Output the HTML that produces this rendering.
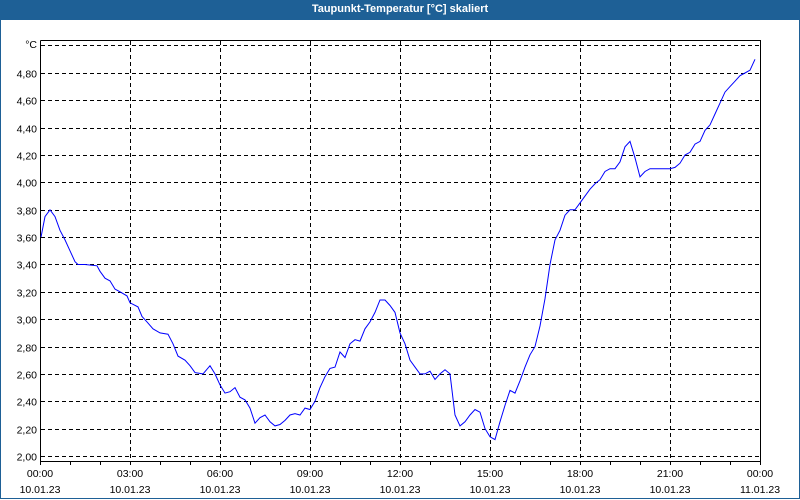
<!DOCTYPE html>
<html><head><meta charset="utf-8"><style>
html,body{margin:0;padding:0;width:800px;height:500px;overflow:hidden;background:#fff}
#t{position:absolute;left:0;top:0;width:800px;height:20px;background:#1e6096;color:#fff;font:bold 11px "Liberation Sans",sans-serif;text-align:center;line-height:19px}
#f{position:absolute;left:0;top:20px;width:798px;height:478px;border:1px solid #1e6096;border-top:none}
svg{position:absolute;left:0;top:0}
text{font-family:"Liberation Sans",sans-serif;font-size:10.5px;fill:#000}
</style></head><body>
<div id="f"></div>
<div id="t">Taupunkt-Temperatur [°C] skaliert</div>
<svg id="s" width="800" height="500" xmlns="http://www.w3.org/2000/svg">
<g id="grid" stroke="#000" stroke-width="1" stroke-dasharray="4,3" fill="none"></g>
<g stroke="#000" stroke-width="1" fill="none">
<path d="M40.5 40.5H760.5V461.5M40.5 40.5V461.5H760.5"/>
<path id="ticks" d=""/>
</g>
<g id="labels"></g>
<polyline id="curve" fill="none" stroke="#0000ff" stroke-width="1" points=""/>
<text x="37" y="48" text-anchor="end">°C</text>
</svg>
<script>
var ns="http://www.w3.org/2000/svg";
function Y(v){return 456-(v-2)*136.8;}
var g=document.getElementById('grid'),lab=document.getElementById('labels');
function line(x1,y1,x2,y2){var l=document.createElementNS(ns,'line');l.setAttribute('x1',x1);l.setAttribute('y1',y1);l.setAttribute('x2',x2);l.setAttribute('y2',y2);g.appendChild(l);}
function txt(x,y,s,a){var t=document.createElementNS(ns,'text');t.setAttribute('x',x);t.setAttribute('y',y);t.setAttribute('text-anchor',a);t.textContent=s;lab.appendChild(t);}
line(41,45.5,760,45.5);
for(var i=0;i<=14;i++){var v=2+i*0.2;var y=Math.round(Y(v))+0.5;line(41,y,760,y);txt(37,y+4,v.toFixed(2).replace('.',','),'end');}
var times=['00:00','03:00','06:00','09:00','12:00','15:00','18:00','21:00','00:00'];
for(var k=0;k<9;k++){var x=40+k*90;if(k>0&&k<8)line(x+0.5,41,x+0.5,461);txt(x,477,times[k],'middle');txt(x,493,k==8?'11.01.23':'10.01.23','middle');}
var d='';for(var h=0;h<=24;h++){var x=40+h*30+0.5;d+='M'+x+' 461V465';}
document.getElementById('ticks').setAttribute('d',d);
var P=[41,3.60,45,3.75,50,3.80,55,3.75,60,3.65,65,3.58,70,3.50,75,3.42,78,3.40,85,3.40,97,3.39,100,3.35,105,3.30,110,3.28,115,3.22,120,3.20,127,3.17,130,3.12,138,3.09,142,3.02,147,2.98,153,2.93,160,2.90,168,2.89,173,2.82,178,2.73,185,2.70,190,2.66,195,2.61,203,2.60,210,2.66,215,2.60,220,2.52,225,2.46,230,2.47,235,2.50,240,2.43,245,2.41,250,2.35,255,2.24,260,2.28,265,2.30,270,2.25,275,2.22,280,2.23,285,2.26,290,2.30,295,2.31,300,2.30,305,2.35,310,2.34,315,2.40,320,2.50,325,2.58,330,2.64,335,2.65,340,2.76,345,2.72,350,2.82,355,2.85,360,2.84,365,2.93,370,2.98,375,3.05,380,3.14,385,3.14,390,3.10,395,3.05,400,2.90,405,2.82,410,2.70,415,2.65,420,2.60,425,2.60,430,2.62,435,2.56,440,2.60,445,2.63,450,2.60,455,2.30,460,2.22,465,2.25,470,2.30,475,2.34,480,2.32,485,2.20,490,2.14,495,2.12,500,2.25,505,2.37,510,2.48,515,2.46,520,2.55,525,2.65,530,2.74,535,2.80,540,2.95,545,3.15,550,3.40,555,3.58,560,3.65,565,3.76,570,3.80,575,3.80,580,3.85,585,3.90,590,3.95,595,3.99,600,4.02,605,4.08,610,4.10,615,4.10,620,4.15,625,4.26,630,4.30,635,4.18,640,4.04,645,4.08,650,4.10,660,4.10,670,4.10,675,4.11,680,4.14,685,4.20,690,4.22,695,4.28,700,4.30,705,4.38,710,4.42,715,4.50,720,4.58,725,4.66,730,4.70,735,4.74,740,4.78,745,4.80,750,4.82,755,4.90];
var pts='';for(var j=0;j<P.length;j+=2){pts+=P[j]+','+Y(P[j+1]).toFixed(1)+' ';}
document.getElementById('curve').setAttribute('points',pts);
</script>
</body></html>
